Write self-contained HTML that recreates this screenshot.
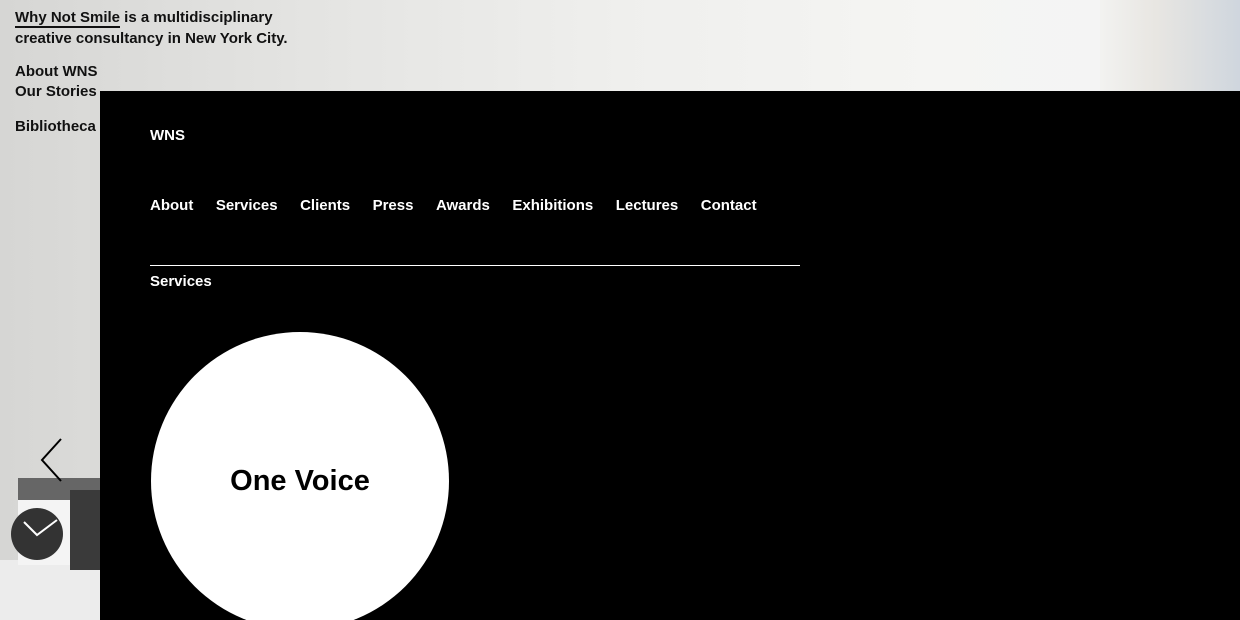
<!DOCTYPE html>
<html><head><style>
*{margin:0;padding:0;box-sizing:border-box}
html,body{width:1240px;height:620px;overflow:hidden}
body{position:relative;font-family:"Liberation Sans",sans-serif;font-weight:bold;
background:linear-gradient(90deg,#d6d6d4 0%,#e4e4e2 25%,#efefed 50%,#f5f5f3 75%,#f3f4f5 100%);}
.intro{position:absolute;left:15px;top:7px;font-size:15px;line-height:21px;color:#111;}
.intro u{text-decoration:none;border-bottom:2px solid #111}
.links{position:absolute;left:15px;top:62px;font-size:15px;line-height:20px;color:#111}
.panel{position:absolute;left:100px;top:91px;width:1140px;height:529px;background:#000;color:#fff;overflow:hidden}
.wns{position:absolute;left:50px;top:36px;font-size:15px}
.nav{position:absolute;left:50px;top:106px;font-size:15px;display:flex;gap:22.5px}
.line{position:absolute;left:50px;top:174px;width:650px;height:1px;background:#fff}
.sv{position:absolute;left:50px;top:182px;font-size:15px}
.circ{position:absolute;left:51px;top:241px;width:298px;height:298px;border-radius:50%;background:#fff;color:#000;font-size:29px;display:flex;align-items:center;justify-content:center}
.win{position:absolute;left:1100px;top:0;width:140px;height:91px;background:linear-gradient(90deg,#f2f2f0,#e8e6e2 40%,#cfd6de)}
</style></head><body>
<div class="win"></div>
<div class="intro"><u>Why Not Smile</u> is a multidisciplinary<br>creative consultancy in New York City.</div>
<div class="links">About WNS<br>Our Stories<br><div style="height:15px"></div>Bibliotheca</div>
<svg style="position:absolute;left:0;top:430px" width="100" height="190">
<rect x="0" y="130" width="100" height="60" fill="#ececec"/>
<rect x="18" y="48" width="82" height="22" fill="#666"/>
<rect x="70" y="60" width="30" height="80" fill="#3a3a3a"/>
<rect x="18" y="70" width="52" height="65" fill="#f4f4f4"/>
<circle cx="37" cy="104" r="26" fill="#333"/>
<path d="M24 92 L37 105 L57 90" stroke="#fff" stroke-width="2" fill="none"/>
<path d="M61 9 L42 30 L61 51" stroke="#000" stroke-width="2" fill="none"/>
</svg>
<div class="panel">
<div class="wns">WNS</div>
<div class="nav"><span>About</span><span>Services</span><span>Clients</span><span>Press</span><span>Awards</span><span>Exhibitions</span><span>Lectures</span><span>Contact</span></div>
<div class="line"></div>
<div class="sv">Services</div>
<div class="circ">One Voice</div>
</div>
</body></html>
